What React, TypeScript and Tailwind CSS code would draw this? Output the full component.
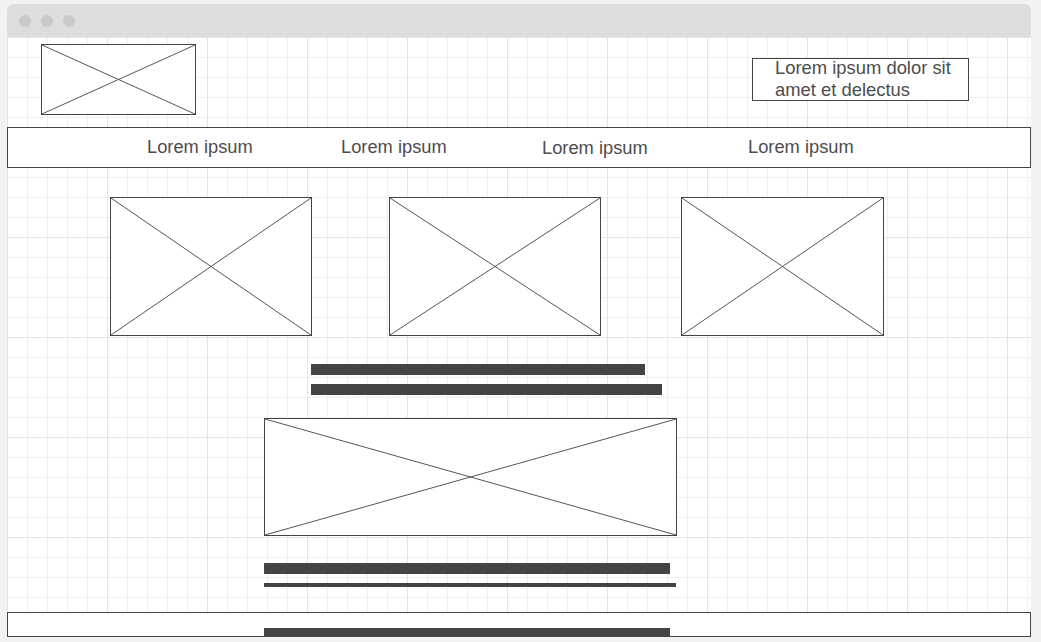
import React from 'react';

// image placeholder: bordered box with a cross
function Placeholder({ className }: { className: string }) {
  return (
    <div className={`relative border border-[#444] bg-white ${className}`}>
      <svg className="absolute inset-0 h-full w-full" preserveAspectRatio="none" viewBox="0 0 100 100">
        <line x1="0" y1="0" x2="100" y2="100" stroke="#555" strokeWidth="1" vectorEffect="non-scaling-stroke" />
        <line x1="100" y1="0" x2="0" y2="100" stroke="#555" strokeWidth="1" vectorEffect="non-scaling-stroke" />
      </svg>
    </div>
  );
}

const navItems = ['Lorem ipsum', 'Lorem ipsum', 'Lorem ipsum', 'Lorem ipsum'];

function App() {
  return (
    <div className="min-h-screen bg-[#f2f2f2] pt-[4px] pl-[7px] font-['Liberation_Sans',Arial,sans-serif] text-[#4d4d4d]">
      <div className="w-[1024px] h-[633px] overflow-hidden rounded-t-[6px] bg-white">
        {/* title bar */}
        <div className="flex h-[33px] items-center gap-[10px] bg-[#dddddd] pl-[12px]">
          <span className="h-[12px] w-[12px] rounded-full bg-[#cacaca]" />
          <span className="h-[12px] w-[12px] rounded-full bg-[#cacaca]" />
          <span className="h-[12px] w-[12px] rounded-full bg-[#cacaca]" />
        </div>

        {/* canvas */}
        <div className="h-[600px] bg-white bg-[linear-gradient(to_right,#e4e4e4_1px,transparent_1px),linear-gradient(to_bottom,#e4e4e4_1px,transparent_1px),linear-gradient(to_right,#efefef_1px,transparent_1px),linear-gradient(to_bottom,#efefef_1px,transparent_1px)] [background-size:100px_100px,100px_100px,20px_20px,20px_20px]">
          <header className="flex h-[90px] items-start">
            <Placeholder className="ml-[34px] mt-[7px] h-[71px] w-[155px]" />
            <div className="ml-auto mr-[62px] mt-[21px] h-[43px] w-[217px] border border-[#444] bg-white pl-[22px] text-[18.4px] leading-[22px]">
              <div className="-mt-[2px]">Lorem ipsum dolor sit amet et delectus</div>
            </div>
          </header>

          <nav className="grid h-[41px] grid-cols-[194px_201px_206px_auto] items-center border border-[#444] bg-white pb-[2px] pl-[139px] text-[18.3px]">
            {navItems.map((item, i) => (
              <span key={i} className={i === 2 ? 'pt-[2px]' : ''}>
                {item}
              </span>
            ))}
          </nav>

          <section className="mt-[29px] flex">
            <Placeholder className="ml-[103px] h-[139px] w-[202px]" />
            <Placeholder className="ml-[77px] h-[139px] w-[212px]" />
            <Placeholder className="ml-[80px] h-[139px] w-[203px]" />
          </section>

          <div className="ml-[304px] mt-[28px] h-[11px] w-[334px] bg-[#444]" />
          <div className="ml-[304px] mt-[9px] h-[11px] w-[351px] bg-[#444]" />

          <Placeholder className="ml-[257px] mt-[23px] h-[118px] w-[413px]" />

          <div className="ml-[257px] mt-[27px] h-[11px] w-[406px] bg-[#444]" />
          <div className="ml-[257px] mt-[9px] h-[4px] w-[412px] bg-[#444]" />

          <footer className="mt-[25px] h-[25px] border border-[#444] bg-white pt-[15px]">
            <div className="ml-[256px] h-[8px] w-[406px] bg-[#444]" />
          </footer>
        </div>
      </div>
    </div>
  );
}

export default App;
